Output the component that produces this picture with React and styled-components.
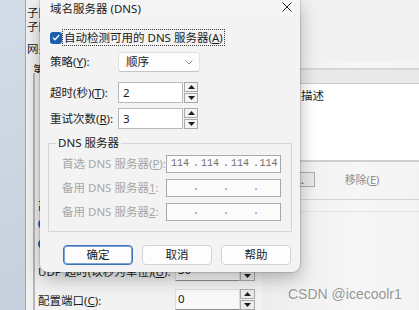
import React from 'react'
import styled, { createGlobalStyle } from 'styled-components'

const GlobalStyle = createGlobalStyle`
  html, body { margin: 0; padding: 0; background: #f0f0f0; overflow: hidden; }
  * { box-sizing: border-box; }
`

const UI_FONT = `"Noto Sans", "Noto Sans CJK SC", sans-serif`

const Screen = styled.div`
  position: relative;
  width: 419px;
  height: 310px;
  overflow: hidden;
  display: flex;
  font-family: ${UI_FONT};
  font-size: 11.5px;
  line-height: 14px;
  color: #1b1b1b;
`

const Desktop = styled.div`
  width: 25px;
  flex: none;
  background: linear-gradient(180deg, #d3dde8 0%, #c5d0dc 100%);
`

/* ---------- background window ---------- */

const BgWindow = styled.div`
  flex: 1;
  display: flex;
  flex-direction: column;
  background: #f1f1f1;
  border-left: 1px solid #9ea8b3;
  padding-left: 1px;
`

const TopLines = styled.div`
  height: 62px;
  flex: none;
  padding-top: 6px;
`

// only the first glyphs show beside the dialog
const TopLine = styled.div`
  width: 13px;
  overflow: hidden;
  white-space: nowrap;
  margin-top: ${p => p.$gap || 0}px;
`

const Main = styled.div`
  flex: 1;
  display: flex;
  min-height: 0;
`

const LeftPane = styled.div`
  width: 235px;
  flex: none;
  display: flex;
  flex-direction: column;
  padding-left: 6px;
`

const TabLabel = styled.div`
  width: 7px;
  height: 18px;
  padding-top: 1px;
  overflow: hidden;
  white-space: nowrap;
`

const TabBody = styled.div`
  flex: 1;
  display: flex;
  flex-direction: column;
  border-left: 2px solid #b7b7b7;
  padding-left: 3px;
  white-space: nowrap;
`

const SectionTitle = styled.div`
  margin-top: 126px;
  height: 14px;
  width: 20px;
  overflow: hidden;
`

const ToggleRow = styled.div`
  height: 20px;
  display: flex;
  align-items: center;
  margin-top: ${p => p.$gap || 0}px;
`

const Toggle = styled.span`
  width: 26px;
  height: 10px;
  border-radius: 5px;
  background: #2c63b5;
  flex: none;
`

const FieldRow = styled.div`
  height: 21px;
  display: flex;
  align-items: stretch;
  margin-top: ${p => p.$gap}px;
`

const FieldLabel = styled.div`
  width: 137px;
  display: flex;
  align-items: center;
  padding-top: 3px;
`

const BgInput = styled.div`
  width: 65px;
  background: #f8f8f8;
  border: 1px solid #dcdcdc;
  border-bottom-color: #8d8d8d;
  padding: 2px 0 0 2px;
`

const RightPane = styled.div`
  flex: 1;
  display: flex;
  flex-direction: column;
  padding-top: 6px;
  background: linear-gradient(90deg, #ededed 0%, #f6f6f6 60%, #f3f3f3 100%);
`

const ListBox = styled.div`
  border-top: 2px solid #d6d6d6;
  border-bottom: 2px solid #cfcfcf;
  display: flex;
  flex-direction: column;
`

const ListHeader = styled.div`
  height: 14px;
  background: #e9e9e9;
  border-bottom: 1px solid #c8c8c8;
`

const ListBody = styled.div`
  height: 76px;
  background: #fff;
  padding: 5px 0 0 39px;
`

const BgButtonRow = styled.div`
  margin-top: 10px;
  height: 15px;
  display: flex;
  gap: 6px;
`

const BgButton = styled.div`
  width: ${p => p.$w}px;
  display: flex;
  align-items: center;
  justify-content: center;
  white-space: nowrap;
  border: 1px solid ${p => (p.$flat ? 'transparent' : '#adadad')};
  background: ${p => (p.$flat ? 'transparent' : '#e9e9e9')};
  color: ${p => (p.$flat ? '#8c8c8c' : '#333')};
  font-size: 11px;
`

const Divider = styled.div`
  height: 1px;
  background: ${p => p.$c};
  margin-top: ${p => p.$gap}px;
`

const Watermark = styled.div`
  position: absolute;
  left: 288px;
  top: 286px;
  font-family: "Liberation Sans", Arial, sans-serif;
  font-size: 14px;
  line-height: 16px;
  color: rgba(120, 120, 120, 0.8);
  text-shadow: 0 0 2px #fff;
  white-space: nowrap;
`

/* ---------- dialog ---------- */

const Dialog = styled.div`
  position: absolute;
  left: 40px;
  top: 0;
  width: 260px;
  height: 272px;
  background: #f3f3f3;
  border-radius: 0 0 8px 8px;
  box-shadow: 0 0 0 1px rgba(0, 0, 0, 0.12), 0 6px 18px rgba(0, 0, 0, 0.28);
  display: flex;
  flex-direction: column;
`

const TitleBar = styled.div`
  height: 17px;
  display: flex;
  align-items: center;
  justify-content: space-between;
  padding-left: 10px;
  background: #f5f5f5;
`

const CloseButton = styled.div`
  width: 26px;
  height: 14px;
  align-self: flex-start;
  display: flex;
  align-items: center;
  justify-content: center;
`

const Body = styled.div`
  display: flex;
  flex-direction: column;
  padding: 13px 8px 0 8px;
`

const CheckRow = styled.div`
  height: 15px;
  display: flex;
  align-items: center;
  padding-left: 2px;
`

const CheckBox = styled.span`
  width: 12px;
  height: 12px;
  border-radius: 3px;
  background: #1b5fae;
  display: flex;
  align-items: center;
  justify-content: center;
  margin-right: 1px;
  flex: none;
`

const FocusLabel = styled.span`
  outline: 1px dotted #3a3a3a;
  outline-offset: 0;
  padding: 0 1px;
  height: 15px;
  display: flex;
  align-items: center;
  white-space: nowrap;
`

const FormRow = styled.div`
  height: ${p => p.$h}px;
  margin-top: ${p => p.$gap}px;
  display: flex;
  align-items: stretch;
  padding-left: 2px;
`

const RowLabel = styled.div`
  width: 68px;
  display: flex;
  align-items: center;
  white-space: nowrap;
`

const Select = styled.div`
  width: 82px;
  background: #fdfdfd;
  border: 1px solid #e2e2e2;
  border-bottom-color: #c4c4c4;
  border-radius: 3px;
  display: flex;
  align-items: center;
  justify-content: space-between;
  padding: 0 6px 0 7px;
`

const TextInput = styled.div`
  width: 65px;
  background: #fff;
  border: 1px solid #b9b9b9;
  display: flex;
  align-items: center;
  padding-left: 4px;
`

const SpinBox = styled.div`
  width: ${p => p.$w}px;
  margin-left: ${p => p.$gap || 0}px;
  display: flex;
  flex-direction: column;
  gap: 1px;
`

const SpinHalf = styled.div`
  flex: 1;
  border: 1px solid #a9a9a9;
  background: ${p => p.$bg || '#f4f4f4'};
  display: flex;
  align-items: center;
  justify-content: center;
`

const Group = styled.fieldset`
  margin: 7px 0 0 0;
  padding: 0 10px 10px 7px;
  border: 1px solid #d6d6d6;
  min-width: 0;
`

const Legend = styled.legend`
  padding: 0 2px;
  line-height: 14px;
  font-size: 11.5px;
`

const IpRow = styled.div`
  height: 18px;
  margin-top: ${p => p.$gap}px;
  display: flex;
  padding-left: 6px;
`

const IpLabel = styled.div`
  width: 104px;
  display: flex;
  align-items: center;
  color: #a6a6a6;
  white-space: nowrap;
`

const IpBox = styled.div`
  flex: 1;
  border: 1px solid #a9a9a9;
  background: #fbfbfb;
  display: grid;
  grid-template-columns: 26px 4px 26px 4px 26px 4px 1fr;
  align-items: center;
  font-family: "Liberation Mono", "DejaVu Sans Mono", monospace;
  font-size: 10px;
  color: #707070;
`

const IpPart = styled.span`
  text-align: center;
`

const ButtonRow = styled.div`
  margin-top: 13px;
  padding-left: 15px;
  display: flex;
  gap: 9px;
`

const DlgButton = styled.div`
  width: 70px;
  height: 20px;
  border-radius: 4px;
  background: #fdfdfd;
  border: 1px solid ${p => (p.$focus ? '#3f73b8' : '#d3d3d3')};
  box-shadow: ${p => (p.$focus ? 'inset 0 0 0 1px #7fa3d3' : 'none')};
  display: flex;
  align-items: center;
  justify-content: center;
`

const Key = styled.span`
  text-decoration: underline;
`

const Arrow = ({ up }) => (
  <svg width="7" height="4" viewBox="0 0 7 4">
    <polygon points={up ? '0,4 7,4 3.5,0' : '0,0 7,0 3.5,4'} fill="#1e1e1e" />
  </svg>
)

const Spinner = ({ w = 14, gap = 1, bg }) => (
  <SpinBox $w={w} $gap={gap}>
    <SpinHalf $bg={bg}><Arrow up /></SpinHalf>
    <SpinHalf $bg={bg}><Arrow /></SpinHalf>
  </SpinBox>
)

const IpField = ({ parts }) => (
  <IpBox>
    <IpPart>{parts[0]}</IpPart><IpPart>.</IpPart>
    <IpPart>{parts[1]}</IpPart><IpPart>.</IpPart>
    <IpPart>{parts[2]}</IpPart><IpPart>.</IpPart>
    <IpPart>{parts[3]}</IpPart>
  </IpBox>
)

export default function App() {
  return (
    <>
      <GlobalStyle />
      <Screen>
        <Desktop />
        <BgWindow>
          <TopLines>
            <TopLine>子网掩码(U):</TopLine>
            <TopLine>子网前缀长度:</TopLine>
            <TopLine $gap={8}>网关(G):</TopLine>
          </TopLines>
          <Main>
            <LeftPane>
              <TabLabel>第一个</TabLabel>
              <TabBody>
                <SectionTitle>高级</SectionTitle>
                <ToggleRow $gap={1}><Toggle /></ToggleRow>
                <ToggleRow><Toggle /></ToggleRow>
                <FieldRow $gap={6}>
                  <FieldLabel>UDP 超时(以秒为单位)(<Key>U</Key>):</FieldLabel>
                  <BgInput>30</BgInput>
                  <Spinner w={15} gap={0} bg="#ececec" />
                </FieldRow>
                <FieldRow $gap={8}>
                  <FieldLabel>配置端口(<Key>C</Key>):</FieldLabel>
                  <BgInput>0</BgInput>
                  <Spinner w={15} gap={0} bg="#ececec" />
                </FieldRow>
              </TabBody>
            </LeftPane>
            <RightPane>
              <ListBox>
                <ListHeader />
                <ListBody>描述</ListBody>
              </ListBox>
              <BgButtonRow>
                <BgButton $w={53}>添加...</BgButton>
                <BgButton $w={82} $flat>移除(<Key>E</Key>)</BgButton>
              </BgButtonRow>
              <Divider $c="#d3d3d3" $gap={12} />
              <Divider $c="#e4e4e4" $gap={11} />
            </RightPane>
          </Main>
        </BgWindow>

        <Dialog>
          <TitleBar>
            <span>域名服务器 (DNS)</span>
            <CloseButton>
              <svg width="10" height="10" viewBox="0 0 10 10">
                <path d="M0.5 0.5 L9.5 9.5 M9.5 0.5 L0.5 9.5" stroke="#222" strokeWidth="1" />
              </svg>
            </CloseButton>
          </TitleBar>
          <Body>
            <CheckRow>
              <CheckBox>
                <svg width="8" height="7" viewBox="0 0 8 7">
                  <path d="M0.8 3.6 L3 5.8 L7.2 1" stroke="#fff" strokeWidth="1.3" fill="none" />
                </svg>
              </CheckBox>
              <FocusLabel>自动检测可用的 DNS 服务器(<Key>A</Key>)</FocusLabel>
            </CheckRow>
            <FormRow $h={20} $gap={7}>
              <RowLabel>策略(<Key>Y</Key>):</RowLabel>
              <Select>
                <span>顺序</span>
                <svg width="8" height="5" viewBox="0 0 8 5">
                  <path d="M0.5 0.5 L4 4 L7.5 0.5" stroke="#8a8a8a" strokeWidth="1" fill="none" />
                </svg>
              </Select>
            </FormRow>
            <FormRow $h={21} $gap={10}>
              <RowLabel>超时(秒)(<Key>T</Key>):</RowLabel>
              <TextInput>2</TextInput>
              <Spinner />
            </FormRow>
            <FormRow $h={21} $gap={5}>
              <RowLabel>重试次数(<Key>R</Key>):</RowLabel>
              <TextInput>3</TextInput>
              <Spinner />
            </FormRow>
            <Group>
              <Legend>DNS 服务器</Legend>
              <IpRow $gap={5}>
                <IpLabel>首选 DNS 服务器(<Key>P</Key>):</IpLabel>
                <IpField parts={['114', '114', '114', '114']} />
              </IpRow>
              <IpRow $gap={6}>
                <IpLabel>备用 DNS 服务器 <Key>1</Key>:</IpLabel>
                <IpField parts={['', '', '', '']} />
              </IpRow>
              <IpRow $gap={6}>
                <IpLabel>备用 DNS 服务器 <Key>2</Key>:</IpLabel>
                <IpField parts={['', '', '', '']} />
              </IpRow>
            </Group>
            <ButtonRow>
              <DlgButton $focus>确定</DlgButton>
              <DlgButton>取消</DlgButton>
              <DlgButton>帮助</DlgButton>
            </ButtonRow>
          </Body>
        </Dialog>

        <Watermark>CSDN @icecoolr1</Watermark>
      </Screen>
    </>
  )
}
